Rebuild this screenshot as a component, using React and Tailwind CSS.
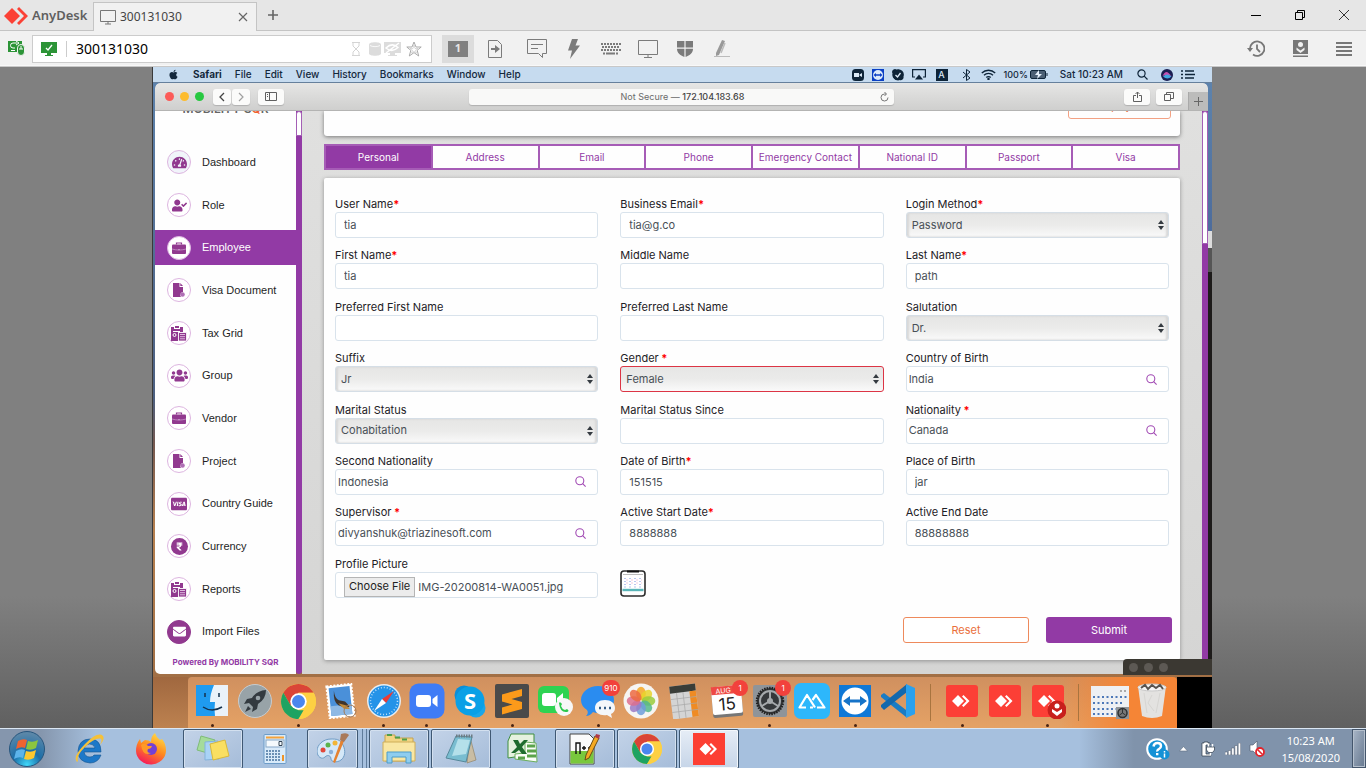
import React from "react";
import {
  FaTachometerAlt,
  FaUserCheck,
  FaUsers,
  FaCcVisa,
  FaRupeeSign,
  FaEnvelope,
  FaApple,
} from "react-icons/fa";

/* ---------- AnyDesk chrome ---------- */

function TitleBar() {
  return (
    <header className="flex h-[31px] items-stretch border-b border-[#c4c4c4] bg-[#e6e6e6]">
      <div className="flex w-[93px] items-center pt-[2px] pl-1 text-[#5f5f5f]">
        <svg width="24" height="18" viewBox="0 0 24 18" aria-hidden="true">
          <path d="M8 1l8 8-8 8-8-8z" fill="#fb4135" />
          <path d="M13 2l2-2 9 9-9 9-2-2 7-7z" fill="#fb4135" />
        </svg>
        <span className="pl-1 text-[13px] font-semibold">AnyDesk</span>
      </div>
      <div className="mt-[2px] -mb-px flex w-[164px] items-center border-x border-t border-[#c4c4c4] bg-[#f1f1f1] pr-2 pl-[6px] text-[#444]">
        <svg width="16" height="15" viewBox="0 0 16 15" fill="none" stroke="#777" aria-hidden="true">
          <path d="M.5.5h15v11H.5zM8 11v3M5 14h6" />
        </svg>
        <span className="flex-1 pl-1 text-[12px]">300131030</span>
        <button aria-label="Close tab">
          <svg width="10" height="10" viewBox="0 0 10 10" stroke="#666" strokeWidth="1.2">
            <path d="M1 1l8 8M9 1l-8 8" />
          </svg>
        </button>
      </div>
      <button aria-label="New tab" className="ml-[11px]">
        <svg width="10" height="10" viewBox="0 0 10 10" stroke="#666" strokeWidth="1.6">
          <path d="M5 0v10M0 5h10" />
        </svg>
      </button>
      <div className="flex flex-1 items-center justify-end gap-[34px] pr-[17px]">
        <button aria-label="Minimize">
          <svg width="10" height="10" viewBox="0 0 10 10" stroke="#000">
            <path d="M0 5.5h10" />
          </svg>
        </button>
        <button aria-label="Restore">
          <svg width="10" height="10" viewBox="0 0 10 10" stroke="#000" fill="none">
            <path d="M.5 2.500h7v7h-7zM2.500 2.500v-2h7v7h-2" />
          </svg>
        </button>
        <button aria-label="Close">
          <svg width="10" height="10" viewBox="0 0 10 10" stroke="#333">
            <path d="M0 0l10 10M10 0L0 10" />
          </svg>
        </button>
      </div>
    </header>
  );
}

function ToolButton({ label, children }) {
  return (
    <button aria-label={label} className="flex h-7 w-[37px] items-center justify-center text-[#7b7b7b]">
      {children}
    </button>
  );
}

function SessionToolbar() {
  return (
    <div className="flex h-[36px] items-center border-b border-[#c8c8c8] bg-[#f1f1f1] shadow-[inset_0_-1px_0_#f8f8f8]">
      <div className="flex w-8 justify-center">
        <svg width="17" height="15" viewBox="0 0 17 15" aria-hidden="true">
          <path d="M0 0h14v5l-3 2v4H0z" fill="#2c9437" />
          <path d="M9 2H5a2 2 0 000 5h2M8 0l3 2-3 2M3 9.500h4" stroke="#fff" fill="none" />
          <rect x="9.500" y="3.500" width="7" height="11" rx="3.500" fill="#2c9437" stroke="#f1f1f1" />
          <path d="M11 8h4M13 5v3" stroke="#fff" />
        </svg>
      </div>
      <div className="flex h-7 w-[400px] items-center gap-[3px] border border-[#ccc] bg-white pr-[9px] pl-2">
        <svg width="16" height="14" viewBox="0 0 16 14" aria-hidden="true">
          <path d="M0 0h16v11h-6v2h2v1H4v-1h2v-2H0z" fill="#2c9437" />
          <path d="M5 6l2 2 4-5" stroke="#fff" strokeWidth="1.300" fill="none" />
        </svg>
        <div className="ml-[6px] h-4 w-px bg-[#ccc]" />
        <input
          aria-label="Remote address"
          defaultValue="300131030"
          className="ml-[6px] min-w-0 flex-1 bg-transparent text-[14px] text-black outline-none"
        />
        <svg width="10" height="14" viewBox="0 0 10 14" fill="none" stroke="#d4d4d4" aria-hidden="true">
          <path d="M1 .5h8M1 13.500h8M2 1v3l3 3 3-3V1M2 13v-3l3-3 3 3v3" />
        </svg>
        <svg className="ml-[5px]" width="12" height="14" viewBox="0 0 12 14" fill="#dcdcdc" aria-hidden="true">
          <path d="M0 2.500C0-.5 12-.5 12 2.500v9c0 3-12 3-12 0z" />
          <path d="M1 3.500c2 1.500 8 1.500 10 0" stroke="#fff" fill="none" strokeWidth=".8" />
        </svg>
        <svg width="17" height="14" viewBox="0 0 17 14" aria-hidden="true">
          <path d="M0 0h17v11h-6v2h2v1H4v-1h2v-2H0z" fill="#dcdcdc" />
          <path d="M2 6q6-6 12-.5Q8 11 2 6zM2 11L15 1" stroke="#fff" fill="none" strokeWidth="1.500" />
        </svg>
        <svg className="ml-[2px]" width="16" height="16" viewBox="0 0 16 16" fill="none" stroke="#aaa" aria-hidden="true">
          <path d="M8 1l2 5h5.200l-4 3.300L12.700 15 8 11.600 3.300 15l1.500-5.700-4-3.300H6z" />
          <path d="M8 4l1 3.500h3L9.500 9.300l1 2.700L8 10.300 5.500 12l1-2.700L4 7.500h3z" strokeWidth=".4" />
        </svg>
      </div>
      <button aria-label="Display 1" className="ml-[10px] flex h-7 w-8 items-center justify-center bg-[#dcdcdc]">
        <span className="flex h-4 w-5 items-center justify-center bg-[#808080] text-[11px] font-bold text-[#e6e6e6]">1</span>
      </button>
      <div className="ml-[2px] flex">
        <ToolButton label="Transfer files">
          <svg width="14" height="18" viewBox="0 0 14 18" fill="none" stroke="currentColor">
            <path d="M.5.5h9l4 4v13H.5z" />
            <path d="M3 8h4V5l5 4-5 4v-3H3z" fill="currentColor" stroke="none" />
          </svg>
        </ToolButton>
        <div className="w-[5px]" />
        <ToolButton label="Chat">
          <svg width="20" height="19" viewBox="0 0 20 19" fill="none" stroke="currentColor">
            <path d="M.5.5h19v14h-4v4l-4-4H.5zM4 5.500h12M4 9.500h7" />
          </svg>
        </ToolButton>
        <ToolButton label="Actions">
          <svg width="14" height="20" viewBox="0 0 14 20">
            <path d="M5 0h6L8.500 6.500H13L3 20l2-8.500H1z" fill="currentColor" />
          </svg>
        </ToolButton>
        <ToolButton label="Keyboard">
          <svg width="20" height="12" viewBox="0 0 20 12" fill="none" stroke="currentColor" strokeWidth="2">
            <path d="M0 1h20M0 7h20" strokeDasharray="2 1" />
            <path d="M1 4h18" strokeDasharray="2 1" />
            <path d="M2 10.500h2M5 10.500h9M15 10.500h2" />
          </svg>
        </ToolButton>
        <ToolButton label="Display">
          <svg width="20" height="18" viewBox="0 0 20 18" fill="none" stroke="currentColor">
            <path d="M.5.5h19v14H.5zM10 15v2.500M6 17.500h8" />
          </svg>
        </ToolButton>
        <ToolButton label="Permissions">
          <svg width="16" height="17" viewBox="0 0 16 17" fill="currentColor">
            <path d="M0 1h7.400v6.500H0zM8.600 1H16v6.500H8.600zM0 8.700h7.400V17C3 15 0 13 0 8.700zM8.600 8.700H16c0 4.300-3 6.300-7.400 8.300z" />
          </svg>
        </ToolButton>
        <ToolButton label="Draw">
          <svg width="16" height="19" viewBox="0 0 16 19" fill="none">
            <path d="M8 1l3 1-6 14-3 1V14z" fill="#999" />
            <path d="M11 4L7 14" stroke="#bbb" strokeWidth="1.500" />
            <path d="M0 17.500h16" stroke="#bbb" />
          </svg>
        </ToolButton>
      </div>
      <div className="flex flex-1 items-center justify-end gap-7 pr-[14px] text-[#777]">
        <button aria-label="History">
          <svg width="18" height="17" viewBox="0 0 18 17" fill="none" stroke="currentColor" strokeWidth="1.800">
            <path d="M3 9A7.200 7.200 0 116 14.500M10 4.500V9l3 3" />
            <path d="M0 8h6l-3 4z" fill="currentColor" stroke="none" />
          </svg>
        </button>
        <button aria-label="Downloads">
          <svg width="15" height="17" viewBox="0 0 15 17">
            <path d="M0 0h15v14H0zM0 15.500h15V17H0z" fill="currentColor" />
            <circle cx="7.500" cy="4.500" r="2.500" fill="#f1f1f1" />
            <path d="M3.500 7.500l4 3 4-3v2.500l-4 3-4-3z" fill="#f1f1f1" />
          </svg>
        </button>
        <button aria-label="Menu">
          <svg width="16" height="14" viewBox="0 0 16 14" stroke="currentColor" strokeWidth="2">
            <path d="M0 1h16M0 5h16M0 9h16M0 13h16" />
          </svg>
        </button>
      </div>
    </div>
  );
}

/* ---------- macOS menu bar ---------- */

const MENUS = ["File", "Edit", "View", "History", "Bookmarks", "Window", "Help"];

function MenuBar() {
  return (
    <div className="flex h-4 items-center border-b border-[#66809c] bg-[#c6dbef] pr-[17px] pl-[15px] text-[10px] font-medium text-[#14283c]">
      <FaApple size={11} />
      <nav className="ml-[14px] flex flex-1 gap-[13px]">
        <b className="font-bold">Safari</b>
        {MENUS.map((m) => (
          <span key={m}>{m}</span>
        ))}
      </nav>
      <div className="flex items-center gap-2">
        <svg width="12" height="12" viewBox="0 0 12 12" aria-hidden="true">
          <rect width="12" height="12" rx="3.500" fill="#0e2438" />
          <path d="M2 4h5v4H2zM7.500 5.500L10 4v4L7.500 6.500z" fill="#dbe9f6" />
        </svg>
        <svg width="12" height="12" viewBox="0 0 12 12" aria-hidden="true">
          <rect width="12" height="12" fill="#0a3fc4" />
          <circle cx="6" cy="6" r="5" fill="#dcebfa" />
          <path d="M1.500 6L4 4v1.300h4V4l2.500 2L8 8V6.700H4V8z" fill="#0a3fc4" />
        </svg>
        <svg width="12" height="12" viewBox="0 0 12 12" aria-hidden="true">
          <path d="M3 0a3 3 0 00-2.500 4.500A5.500 5.500 0 007.500 11 3 3 0 0011.500 7.500 5.500 5.500 0 004.500.5z" fill="#0e2438" />
          <circle cx="6" cy="6" r="5.200" fill="#0e2438" />
          <path d="M3.500 6l2 2 3-4" stroke="#dbe9f6" strokeWidth="1.300" fill="none" />
        </svg>
        <svg width="14" height="11" viewBox="0 0 14 11" aria-hidden="true">
          <path d="M3 8H.6V.6h12.800V8H11" fill="none" stroke="#0e2438" strokeWidth="1.200" />
          <path d="M7 5.500l4 5H3z" fill="#0e2438" />
        </svg>
        <span className="ml-[2px] flex h-3 w-3 items-center justify-center bg-[#0e2438] text-[9px] text-[#dbe9f6]">A</span>
        <svg className="ml-[6px]" width="9" height="12" viewBox="0 0 9 12" fill="none" stroke="#0e2438" aria-hidden="true">
          <path d="M1 3l7 6-3.500 2.500V.5L8 3 1 9" />
        </svg>
        <svg className="ml-[2px]" width="15" height="11" viewBox="0 0 15 11" fill="none" stroke="#0e2438" strokeWidth="1.300" aria-hidden="true">
          <path d="M.8 4a9.500 9.500 0 0113.400 0M3 6.300a6.400 6.400 0 019 0M5.300 8.500a3 3 0 014.400 0" />
          <circle cx="7.500" cy="10" r=".6" />
        </svg>
        <span className="text-[9px]">100%</span>
        <svg className="-ml-[6px]" width="18" height="9" viewBox="0 0 18 9" aria-hidden="true">
          <rect x=".5" y=".5" width="15" height="8" rx="1.500" fill="#4b5f74" stroke="#0e2438" />
          <path d="M9 0L5 5h3L7 9l5-5H9z" fill="#e4effa" />
          <path d="M17 3v3" stroke="#0e2438" />
        </svg>
        <span className="ml-1">Sat 10:23 AM</span>
        <svg className="ml-[6px]" width="11" height="11" viewBox="0 0 11 11" fill="none" stroke="#0e2438" strokeWidth="1.200" aria-hidden="true">
          <circle cx="4.500" cy="4.500" r="3.600" />
          <path d="M7.200 7.200L10.500 10.500" />
        </svg>
        <svg className="ml-[5px]" width="12" height="12" viewBox="0 0 12 12" aria-hidden="true">
          <circle cx="6" cy="6" r="6" fill="#1a1e52" />
          <path d="M1.500 7q3-6 6-3t3 3q-5-2-9 0z" fill="#c54fb0" />
          <path d="M2 7.500q4-4 8.500 0-4 4-8.500 0z" fill="#42a5e0" />
        </svg>
        <svg width="14" height="9" viewBox="0 0 14 9" stroke="#0e2438" strokeWidth="1.500" aria-hidden="true">
          <path d="M0 1h2M4 1h9M0 4.500h2M4 4.500h10M0 8h2M4 8h9" />
        </svg>
      </div>
    </div>
  );
}

/* ---------- Safari window ---------- */

function SafariButton({ label, className = "w-[26px]", children }) {
  return (
    <button
      aria-label={label}
      className={"flex h-4 items-center justify-center rounded-[3px] bg-[#fbfbfa] text-[#606060] shadow-[0_1px_1px_#b0b0b0] " + className}
    >
      {children}
    </button>
  );
}

function SafariToolbar() {
  return (
    <div className="grid h-7 grid-cols-[28fr_38fr_28fr] items-center rounded-t-[5px] border-b border-[#b4b4b3] bg-linear-to-b from-[#e6e6e5] to-[#cfcfce]">
      <div className="flex items-center pl-[10px]">
        <div className="flex gap-[6px]">
          <span className="h-[9px] w-[9px] rounded-full bg-[#fc5b57]" />
          <span className="h-[9px] w-[9px] rounded-full bg-[#fdbc2e]" />
          <span className="h-[9px] w-[9px] rounded-full bg-[#27c840]" />
        </div>
        <div className="ml-[9px] flex gap-px">
          <SafariButton label="Back" className="w-[18px]">
            <svg width="6" height="10" viewBox="0 0 6 10" fill="none" stroke="#444" strokeWidth="1.300">
              <path d="M5 1L1 5l4 4" />
            </svg>
          </SafariButton>
          <SafariButton label="Forward" className="w-[18px]">
            <svg width="6" height="10" viewBox="0 0 6 10" fill="none" stroke="#a0a0a0" strokeWidth="1.200">
              <path d="M1 1l4 4-4 4" />
            </svg>
          </SafariButton>
        </div>
        <div className="ml-2">
          <SafariButton label="Show sidebar">
            <svg width="12" height="9" viewBox="0 0 12 9" fill="none" stroke="currentColor">
              <path d="M.5.5h11v8H.5zM4.500.5v8M2 2.500h1M2 4.500h1" />
            </svg>
          </SafariButton>
        </div>
      </div>
      <div className="flex h-4 items-center rounded-[3px] bg-[#f9f9f8] pr-[5px] pl-4 text-[9px] text-[#6a6a6a] shadow-[0_1px_1px_#b0b0b0]">
        <span className="flex-1 text-center">
          Not Secure — <span className="font-medium text-[#444]">172.104.183.68</span>
        </span>
        <button aria-label="Reload">
          <svg width="9" height="10" viewBox="0 0 9 10" fill="none" stroke="#777">
            <path d="M8 5.500A3.500 3.500 0 114.500 2H6M4.500 0l2 2-2 2" />
          </svg>
        </button>
      </div>
      <div className="flex h-full items-center justify-end gap-[6px]">
        <SafariButton label="Share">
          <svg width="9" height="11" viewBox="0 0 9 11" fill="none" stroke="currentColor">
            <path d="M3 4.500H.5v6h8v-6H6M4.500 7V1M2.500 3l2-2 2 2" />
          </svg>
        </SafariButton>
        <SafariButton label="Tab overview">
          <svg width="10" height="9" viewBox="0 0 10 9" fill="none" stroke="currentColor">
            <path d="M.5 2.500h6v6h-6zM2.500 2.500v-2h7v6h-3" />
          </svg>
        </SafariButton>
        <button aria-label="New tab" className="flex h-[18px] w-5 items-center justify-center self-end border-l border-[#a9a9a9] bg-[#bcbcbb]">
          <svg width="9" height="9" viewBox="0 0 9 9" stroke="#666">
            <path d="M4.500 0v9M0 4.500h9" />
          </svg>
        </button>
      </div>
    </div>
  );
}

/* ---------- Sidebar ---------- */

function BriefcaseIcon() {
  return (
    <svg width="14" height="12" viewBox="0 0 14 12" aria-hidden="true">
      <path d="M4.500 2.500V1h5v1.500" fill="none" stroke="currentColor" strokeWidth="1.200" />
      <path d="M1 2.500h12q1 0 1 1v7.500q0 1-1 1H1q-1 0-1-1V3.500q0-1 1-1z" fill="currentColor" />
      <path d="M0 7q3.500 1 6 1M14 7q-3.500 1-6 1" stroke="#d9b0dc" strokeWidth=".6" fill="none" />
      <path d="M6.300 7h1.400v1.600H6.300z" fill="#d9b0dc" />
    </svg>
  );
}

function DocIcon() {
  return (
    <svg width="14" height="15" viewBox="0 0 14 15" aria-hidden="true">
      <path d="M1 0h6.500v4H11v5a3 3 0 00-2 5H1z" fill="currentColor" />
      <path d="M8.300 0L11 3H8.300z" fill="currentColor" />
      <circle cx="10.500" cy="11.500" r="2.300" fill="#b06fb5" />
    </svg>
  );
}

function GridIcon() {
  return (
    <svg width="16" height="15" viewBox="0 0 16 15" aria-hidden="true">
      <path d="M0 1h3v2h6V1h3v5h-5v9H0z" fill="currentColor" />
      <path d="M4 0h4v2H4z" fill="currentColor" />
      <path d="M2 5.500h7M2 9a1.500 1.500 0 003 0 1.500 1.500 0 00-3 0" stroke="#fff" fill="none" />
      <path d="M7.500 6.500h8V15h-8z" fill="currentColor" stroke="#fff" strokeWidth=".8" />
      <path d="M9 8.500h5M9 10.700h5M9 12.800h5" stroke="#e6c8e8" strokeWidth=".9" />
    </svg>
  );
}

const NAV = [
  { label: "Dashboard", icon: <FaTachometerAlt size={15} />, tint: true },
  { label: "Role", icon: <FaUserCheck size={15} /> },
  { label: "Employee", icon: <BriefcaseIcon />, active: true },
  { label: "Visa Document", icon: <DocIcon /> },
  { label: "Tax Grid", icon: <GridIcon /> },
  { label: "Group", icon: <FaUsers size={17} /> },
  { label: "Vendor", icon: <BriefcaseIcon /> },
  { label: "Project", icon: <DocIcon /> },
  { label: "Country Guide", icon: <FaCcVisa size={16} /> },
  {
    label: "Currency",
    icon: (
      <span className="flex h-[17px] w-[17px] items-center justify-center rounded-full bg-[#91398f] text-white">
        <FaRupeeSign size={9} />
      </span>
    ),
  },
  { label: "Reports", icon: <GridIcon /> },
  { label: "Import Files", icon: <FaEnvelope size={13} color="#fff" />, solid: true },
];

function Sidebar() {
  return (
    <aside className="flex w-[141px] flex-col overflow-hidden bg-[#fefefe]">
      <div className="flex h-[30px] justify-center">
        <div className="-mt-[10px] text-[12px] leading-4 font-semibold whitespace-nowrap text-[#666]">
          MOBILITY S<span className="text-[#f06030]">Q</span>R
        </div>
      </div>
      <nav className="flex flex-1 flex-col font-['Liberation_Sans',sans-serif]">
        {NAV.map((n) => (
          <div key={n.label} className="flex flex-1 items-center">
            <a
              href="#"
              className={
                "flex h-[35px] w-full items-center gap-[11px] pl-3 text-[11px] " +
                (n.active ? "bg-[#923aa5] text-white" : "text-[#1f1f1f]")
              }
            >
              <span
                className={
                  "flex h-6 w-6 items-center justify-center rounded-full border text-[#91398f] " +
                  (n.solid ? "border-[#91398f] bg-[#91398f]" : n.tint ? "border-[#ddb5e0] bg-[#f1f4fa]" : "border-[#ddb5e0] bg-white")
                }
              >
                {n.icon}
              </span>
              {n.label}
            </a>
          </div>
        ))}
      </nav>
      <div className="h-[21px] text-center text-[8px] leading-[18px] font-bold text-[#923aa5]">Powered By MOBILITY SQR</div>
    </aside>
  );
}

/* ---------- Employee form ---------- */

const TABS = ["Personal", "Address", "Email", "Phone", "Emergency Contact", "National ID", "Passport", "Visa"];

const FIELDS = [
  { label: "User Name", req: "*", value: "tia" },
  { label: "Business Email", req: "*", value: "tia@g.co" },
  { label: "Login Method", req: "*", value: "Password", kind: "select" },
  { label: "First Name", req: "*", value: "tia" },
  { label: "Middle Name", value: "" },
  { label: "Last Name", req: "*", value: "path" },
  { label: "Preferred First Name", value: "" },
  { label: "Preferred Last Name", value: "" },
  { label: "Salutation", value: "Dr.", kind: "select" },
  { label: "Suffix", value: "Jr", kind: "select" },
  { label: "Gender", req: " *", value: "Female", kind: "select", invalid: true },
  { label: "Country of Birth", value: "India", kind: "search" },
  { label: "Marital Status", value: "Cohabitation", kind: "select" },
  { label: "Marital Status Since", value: "" },
  { label: "Nationality", req: " *", value: "Canada", kind: "search" },
  { label: "Second Nationality", value: "Indonesia", kind: "search" },
  { label: "Date of Birth", req: "*", value: "151515" },
  { label: "Place of Birth", value: "jar" },
  { label: "Supervisor", req: " *", value: "divyanshuk@triazinesoft.com", kind: "search" },
  { label: "Active Start Date", req: "*", value: "8888888" },
  { label: "Active End Date", value: "88888888" },
];

const LABEL = "block h-4 text-[11px] leading-4 whitespace-pre text-[#1d2126]";
const BOX = "h-[26px] w-full rounded-[3px] border text-[11px] text-[#495057] outline-none";

function Field({ label, req, value, kind, invalid }) {
  const id = label.toLowerCase().replaceAll(" ", "-");
  return (
    <div>
      <label htmlFor={id} className={LABEL}>
        {label}
        {req && <span className="font-bold text-[#f00]">{req}</span>}
      </label>
      {kind === "select" ? (
        <div className="relative">
          <select
            id={id}
            defaultValue={value}
            className={
              BOX +
              " block appearance-none bg-linear-to-b from-[#e6e6e5] via-[#ebebea] to-[#fafafa] px-[5px] " +
              (invalid
                ? "border-[#dc3545]"
                : "border-[#d5dee6] shadow-[inset_2px_0_2px_#d8d8d8,inset_-2px_0_2px_#d8d8d8]")
            }
          >
            <option>{value}</option>
          </select>
          <svg className="pointer-events-none absolute top-2 right-[5px]" width="6" height="10" viewBox="0 0 6 10" fill="#343a40" aria-hidden="true">
            <path d="M3 0l3 4H0zM3 10l3-4H0z" />
          </svg>
        </div>
      ) : kind === "search" ? (
        <div className={BOX + " flex items-center border-[#d9e3ec] bg-white pr-[11px] pl-[2px]"}>
          <input id={id} defaultValue={value} className="min-w-0 flex-1 bg-transparent outline-none" />
          <button aria-label={"Search " + label}>
            <svg width="11" height="11" viewBox="0 0 11 11" fill="none" stroke="#a24bb4" strokeWidth="1.100">
              <circle cx="4.800" cy="4.800" r="4" />
              <path d="M7.700 7.700L10.600 10.600" />
            </svg>
          </button>
        </div>
      ) : (
        <input id={id} defaultValue={value} className={BOX + " block border-[#d9e3ec] bg-white px-2"} />
      )}
    </div>
  );
}

function EmployeeForm() {
  return (
    <form
      onSubmit={(e) => e.preventDefault()}
      className="mt-[9px] flex flex-1 flex-col rounded-[2px] bg-[#fefefe] px-[11px] pt-[18px] pb-[17px] shadow-[0_1px_4px_#8f8f8f]"
    >
      <div className="grid flex-1 auto-rows-fr grid-cols-3 gap-x-[22px]">
        {FIELDS.map((f) => (
          <Field key={f.label} {...f} />
        ))}
        <div>
          <span id="picture-label" className={LABEL}>
            Profile Picture
          </span>
          <label className={BOX + " relative flex items-end border-[#d9e3ec] bg-white pl-2"}>
            <input type="file" aria-labelledby="picture-label" className="sr-only" />
            <span className="mr-[3px] flex h-5 items-center border border-[#b5b5b5] bg-[#ececec] px-1 text-[#222]">Choose File</span>
            <span className="leading-5">IMG-20200814-WA0051.jpg</span>
          </label>
        </div>
        <div className="pt-[14px]">
          <svg width="26" height="27" viewBox="0 0 26 27" role="img" aria-label="Profile picture preview">
            <rect x="1" y="1" width="24" height="25" rx="3" fill="#fff" stroke="#2c2c2c" strokeWidth="1.600" />
            <path d="M7 1.500h12" stroke="#111" strokeWidth="2" />
            <path d="M3 4.500h20" stroke="#bbb" />
            <path d="M4 8.500h19M4 11.500h19M4 14.500h19M4 17h19" stroke="#b9c6ee" strokeDasharray="2 3" />
            <path d="M6 10h16M6 13h16" stroke="#f3cbe2" strokeDasharray="2 3" />
            <path d="M2.500 20h21" stroke="#59b5b8" strokeWidth="2.400" />
          </svg>
        </div>
      </div>
      <div className="-mr-[3px] mt-[10px] flex justify-end gap-[17px] text-[11px]">
        <button type="reset" className="h-[26px] w-[126px] rounded-[3px] border border-[#ee8a5c] bg-white text-[#ea6f3c]">
          Reset
        </button>
        <button type="submit" className="h-[26px] w-[126px] rounded-[3px] bg-[#923aa5] text-white">
          Submit
        </button>
      </div>
    </form>
  );
}

function MainPane() {
  return (
    <main className="flex min-w-0 flex-1 flex-col overflow-hidden bg-linear-to-b from-[#e0e0df] to-[#d5d5d4] px-[22px] pb-[14px]">
      <div className="h-[25px] rounded-b-[3px] bg-[#fefefe] shadow-[0_1px_4px_#777]">
        <div className="flex h-full justify-end overflow-hidden pr-[9px]">
          <button className="-mt-[18px] h-[26px] w-[103px] rounded-[3px] border border-[#f3a284] text-[10px] text-[#ea6f3c]">
            Employee
          </button>
        </div>
      </div>
      <div role="tablist" className="mt-2 -mb-px flex h-[26px] border border-[#a65cb6] bg-[#fefefe] text-[10px]">
        {TABS.map((t, i) => (
          <button
            key={t}
            role="tab"
            aria-selected={i === 0}
            className={
              "min-w-0 flex-1 border border-[#a65cb6] whitespace-nowrap " +
              (i === 0 ? "bg-[#923aa5] text-white" : "text-[#923aa5]")
            }
          >
            {t}
          </button>
        ))}
      </div>
      <EmployeeForm />
    </main>
  );
}

function ScrollTrack({ thumb }) {
  return (
    <div className="w-[6px] shrink-0 rounded-b-full bg-[#923aa5]">
      <div className={"rounded-t-full border border-[#a45fb5] bg-white " + thumb} />
    </div>
  );
}

/* ---------- Dock ---------- */

function Chrome({ size }) {
  return (
    <svg width={size} height={size} viewBox="0 0 34 34" aria-hidden="true">
      <circle cx="17" cy="17" r="17" fill="#fdd043" />
      <path d="M2.300 8.500A17 17 0 0131.700 8.500H17L9.600 21.300z" fill="#da4437" />
      <path d="M2.300 8.500L9.600 21.200 17 25.500h7.400L17 34A17 17 0 012.300 8.500z" fill="#1ea362" />
      <path d="M24.400 21.200L17 34A17 17 0 0031.700 8.500H17z" fill="#fdd043" />
      <circle cx="17" cy="17" r="8" fill="#fff" />
      <circle cx="17" cy="17" r="6.300" fill="#4a86ee" />
    </svg>
  );
}

function Ico({ children, label }) {
  return (
    <svg width="36" height="36" viewBox="0 0 36 36" role="img" aria-label={label}>
      {children}
    </svg>
  );
}

function AnyDeskIcon({ incoming }) {
  return (
    <Ico label="AnyDesk">
      <rect x="2" y="2" width="32" height="32" rx="3" fill="#fc3f36" />
      <path d="M14 12l6 6-6 6-6-6zM18 13.500l1.500-1.500 6 6-6 6-1.500-1.500 4.500-4.500z" fill="#fff" />
      {incoming && (
        <g>
          <circle cx="27" cy="27" r="9.500" fill="#c8201c" />
          <circle cx="27" cy="23" r="2.500" fill="#fff" />
          <path d="M22 26l5 3 5-3v3l-5 4-5-4z" fill="#fff" />
        </g>
      )}
    </Ico>
  );
}

const PETALS = ["#f5a623", "#e8d32c", "#9acb3c", "#55b889", "#6f9ddb", "#9a7ac6", "#dc6f8e", "#ec6a42"];

const APPS = [
  {
    dot: true,
    icon: (
      <Ico label="Finder">
        <rect x="2" y="2" width="32" height="31" fill="#eaf2fa" />
        <path d="M2 2h18q-4 9-4 17h5q-1 7 0 14H2z" fill="#1f9bf0" />
        <path d="M11 10v4M25 10v4M9 24q9 6 19 0" stroke="#15324e" strokeWidth="1.500" fill="none" />
      </Ico>
    ),
  },
  {
    icon: (
      <Ico label="Launchpad">
        <circle cx="18" cy="18" r="16.500" fill="#98a3a8" stroke="#c8ccce" />
        <path d="M29 7q-10 1-14 8l-5 1-3 5 5-1 4 4-1 5 5-3 1-5q8-5 8-14zM11 23l-3 6 6-3z" fill="#333a40" />
        <circle cx="21" cy="15" r="2.300" fill="#98a3a8" />
      </Ico>
    ),
  },
  { dot: true, icon: <Chrome size={35} /> },
  {
    icon: (
      <Ico label="Mail">
        <g transform="rotate(-6 18 18)">
          <rect x="5" y="2" width="25" height="32" fill="#fff" stroke="#fff" strokeWidth="2" strokeDasharray="2 1.500" />
          <rect x="7" y="4" width="21" height="28" fill="#4a90d9" />
          <path d="M7 22h21v10H7z" fill="#8fb9e4" />
          <path d="M12 7q0 8 4 10l6 2 4 5-3 2-8-4q-5-4-3-15z" fill="#3f342c" />
          <path d="M15 20l8 3 3 4-6-1z" fill="#c08a3a" />
        </g>
        <circle cx="27" cy="28" r="6" fill="none" stroke="#a27a58" />
      </Ico>
    ),
  },
  {
    dot: true,
    icon: (
      <Ico label="Safari">
        <circle cx="18" cy="18" r="17" fill="#e9edf0" />
        <circle cx="18" cy="18" r="15.500" fill="#2493e8" />
        <circle cx="18" cy="18" r="13.500" fill="none" stroke="#bfe0fa" strokeDasharray="1 2" strokeWidth="1.500" />
        <path d="M28 8l-8 12-4-4z" fill="#ec3b36" />
        <path d="M8 28l8-12 4 4z" fill="#fff" />
      </Ico>
    ),
  },
  {
    dot: true,
    icon: (
      <Ico label="Zoom">
        <rect x=".5" y=".5" width="35" height="35" rx="9" fill="#3f7cf6" />
        <rect x="7" y="12" width="15" height="12" rx="3" fill="#fff" />
        <path d="M23.500 16l5-4v12l-5-4z" fill="#fff" />
      </Ico>
    ),
  },
  {
    dot: true,
    icon: (
      <Ico label="Skype">
        <circle cx="12" cy="12" r="9.500" fill="#0c8fd8" />
        <circle cx="24" cy="25" r="9.500" fill="#1aa6e8" />
        <circle cx="18" cy="18" r="14.500" fill="#0aa0e6" />
        <text x="18" y="26" textAnchor="middle" fontSize="22" fontWeight="bold" fill="#fff" fontFamily="Noto Sans, sans-serif">S</text>
      </Ico>
    ),
  },
  {
    dot: true,
    icon: (
      <Ico label="Sublime Text">
        <rect x="1" y="1" width="34" height="34" rx="2" fill="#4a4a4a" />
        <path d="M8 11.500L28 6v7l-10.500 3L28 19v7L8 31.500v-7L18.500 21.500 8 18.500z" fill="#fb9a1a" />
      </Ico>
    ),
  },
  {
    icon: (
      <Ico label="FaceTime">
        <rect x="1" y="3" width="31" height="27" rx="6" fill="#2ed352" />
        <rect x="5" y="10" width="14" height="13" rx="3" fill="#fff" />
        <path d="M20 15l6-5v13l-6-5z" fill="#fff" />
        <circle cx="27" cy="24" r="9" fill="#f7f7f7" />
        <path d="M22 20q1-2 3 1l-1 2q1 3 4 4l2-1q3 2 0 3-7 1-8-9z" fill="#2bc94c" />
      </Ico>
    ),
  },
  {
    dot: true,
    badge: "910",
    icon: (
      <Ico label="Messages">
        <path d="M18 3c9 0 16 6 16 14s-7 13-16 13q-3 0-5-1-3 4-7 4 3-3 1-6-6-4-6-10C1 9 9 3 18 3z" fill="#2a8cf0" />
        <path d="M25 17c6 0 10 3 10 8q0 4-4 6l1 4-5-3c-7 1-12-2-12-7s4-8 10-8z" fill="#f4f7fa" />
        <path d="M19 25h2M24 25h2M29 25h2" stroke="#335b86" strokeWidth="2.500" />
      </Ico>
    ),
  },
  {
    icon: (
      <Ico label="Photos">
        <circle cx="18" cy="18" r="17.500" fill="#f6f5f3" />
        {PETALS.map((c, i) => (
          <ellipse key={c} cx="18" cy="10.500" rx="4.800" ry="6.800" fill={c} opacity=".85" transform={`rotate(${i * 45} 18 18)`} />
        ))}
      </Ico>
    ),
  },
  {
    icon: (
      <Ico label="Calculator">
        <g transform="rotate(-7 18 18)">
          <rect x="5" y="2" width="26" height="33" fill="#d4d4d4" />
          <path d="M5 2h26v7H5z" fill="#3a3d38" />
          <path d="M24.500 9H31v26h-6.500z" fill="#ef8b24" />
          <path d="M5 15h26M5 21.500h26M5 28h26M11.500 9v26M18 9v26" stroke="#a8a8a8" strokeWidth=".7" />
        </g>
      </Ico>
    ),
  },
  {
    badge: "1",
    icon: (
      <Ico label="Calendar">
        <g transform="rotate(-5 18 18)">
          <rect x="3" y="4" width="30" height="30" rx="2" fill="#777" />
          <rect x="3" y="3" width="30" height="28" rx="2" fill="#fff" />
          <path d="M3 3h30v8H3z" fill="#ee4a44" />
          <text x="15" y="10" textAnchor="middle" fontSize="7" fill="#fff" fontFamily="Inter, sans-serif">AUG</text>
          <text x="18" y="27" textAnchor="middle" fontSize="17" fill="#222" fontFamily="Inter, sans-serif">15</text>
        </g>
      </Ico>
    ),
  },
  {
    dot: true,
    badge: "1",
    icon: (
      <Ico label="System Preferences">
        <rect x="1" y="2" width="34" height="32" rx="2" fill="#8f9499" />
        <circle cx="18" cy="18" r="13" fill="#35383b" stroke="#222" strokeWidth="2.500" strokeDasharray="1.500 1" />
        <circle cx="18" cy="18" r="10" fill="none" stroke="#a5a9ac" strokeWidth="2" />
        <path d="M18 18V9M18 18l-8 5M18 18l8 5" stroke="#a5a9ac" strokeWidth="2" />
        <circle cx="18" cy="18" r="3" fill="#a5a9ac" />
      </Ico>
    ),
  },
  {
    icon: (
      <Ico label="Mobile app manager">
        <rect width="36" height="36" rx="7" fill="#2db7fb" />
        <path
          d="M12 24.500H5.500L13 12l8 12.500M16 24.500h3M18.500 17L22 12l8.500 12.500H23"
          fill="none"
          stroke="#fff"
          strokeWidth="2.200"
          strokeLinejoin="round"
        />
      </Ico>
    ),
  },
  {
    dot: true,
    icon: (
      <Ico label="TeamViewer">
        <rect x="2" y="2" width="32" height="32" fill="#0f78d6" />
        <circle cx="18" cy="18" r="13.500" fill="#fff" />
        <path d="M6 18l7-5v3.500h10V13l7 5-7 5v-3.500H13V23z" fill="#1673c8" />
      </Ico>
    ),
  },
  {
    icon: (
      <Ico label="Visual Studio Code">
        <path d="M1 12l3-2 22 17v7L1 14z" fill="#1a7cc4" />
        <path d="M1 24l3 3L27 9V1L1 22z" fill="#1268ad" />
        <path d="M26 1l9 4v26l-9 4z" fill="#2aa1ee" />
      </Ico>
    ),
  },
];

function DockItem({ dot, badge, icon }) {
  return (
    <div className="relative flex min-w-0 flex-1 flex-col items-center pt-[6px]">
      <div className="flex h-9 items-center">{icon}</div>
      {dot && <span className="mt-[5px] h-[3px] w-[3px] rounded-full bg-[#4a2412]" />}
      {badge && (
        <span className="absolute top-[3px] right-0 flex h-4 min-w-4 items-center justify-center rounded-full bg-[#f2413c] px-[2px] text-[8px] text-white">
          {badge}
        </span>
      )}
    </div>
  );
}

function Dock() {
  return (
    <div className="relative mt-[3px] flex h-[51px]">
      <div className="w-[35px] shrink-0 bg-linear-to-b from-[#a0683f] to-[#bd8250]" />
      <div className="relative flex min-w-0 flex-1 rounded-t-[4px] bg-[linear-gradient(to_right,transparent_88%,#f58536_95%),linear-gradient(to_bottom,#d0905f,#e5a265)] pr-[3px] pl-[3px]">
        {APPS.map((a, i) => (
          <DockItem key={i} {...a} />
        ))}
        <div className="mx-[10px] my-[7px] w-px bg-[#a8743f]" />
        <DockItem dot icon={<AnyDeskIcon />} />
        <DockItem icon={<AnyDeskIcon />} />
        <DockItem dot icon={<AnyDeskIcon incoming />} />
        <div className="mx-[9px] my-[7px] w-px bg-[#a8743f]" />
        <DockItem
          icon={
            <svg width="38" height="36" viewBox="0 0 38 36" role="img" aria-label="Minimized window">
              <rect x="0" y="3" width="38" height="31" fill="#eef0f3" />
              <path d="M2 14h35M2 20h29M2 26h24M2 31h20" stroke="#4d78b8" strokeWidth="2" strokeDasharray="2 2.500" />
              <path d="M29 8h6" stroke="#aaa" strokeWidth="2" strokeDasharray="2 2" />
              <rect x="25" y="24" width="13" height="12" fill="#8f9499" />
              <circle cx="31.500" cy="30" r="4.500" fill="#777" stroke="#2e3133" strokeWidth="1.500" />
              <path d="M31.500 30v-4M31.500 30l-3 2M31.500 30l3 2" stroke="#2e3133" />
            </svg>
          }
        />
        <DockItem
          icon={
            <Ico label="Trash">
              <path d="M4 3h28l-4 30q-10 4-20 0z" fill="#e3e2e0" />
              <ellipse cx="18" cy="4.500" rx="14" ry="3.500" fill="#f6f6f6" stroke="#c9c9c9" />
              <path d="M7 5l4-3 3 4 4-4 4 3 4-3 3 4" stroke="#57534f" strokeWidth="2" fill="none" />
              <path d="M10 10l3 20M18 12l-4 8 6 8M26 10l-4 20" stroke="#d6d5d2" fill="none" />
            </Ico>
          }
        />
      </div>
      <div className="w-[35px] shrink-0 bg-black" />
      <div className="absolute -top-[18px] right-0 flex h-4 w-[89px] items-center gap-[6px] rounded-tl-[4px] bg-[#3b3832] pl-[6px]">
        <span className="h-[9px] w-[9px] rounded-full bg-[#5d5954]" />
        <span className="h-[9px] w-[9px] rounded-full bg-[#5d5954]" />
        <span className="h-[9px] w-[9px] rounded-full bg-[#5d5954]" />
      </div>
    </div>
  );
}

/* ---------- Windows taskbar ---------- */

function TaskButton({ label, open, active, children }) {
  return (
    <button
      aria-label={label}
      className={
        "flex h-10 w-[60px] items-center justify-center " +
        (active
          ? "rounded-[2px] border border-[#3f5873] bg-linear-to-b from-[#e6edf6] to-[#c6d5e8] shadow-[inset_0_0_0_1px_#f3f7fb]"
          : open
            ? "rounded-[2px] border border-[#3f5873] bg-linear-to-br from-[#c3d3e8] to-[#a5bcd9] shadow-[inset_0_0_0_1px_#d3e0ef]"
            : "")
      }
    >
      {children}
    </button>
  );
}

function Taskbar() {
  return (
    <footer className="flex h-10 items-center border-t border-[#dbe7f4] bg-[linear-gradient(to_right,#8596ad_0,#8596ad_3%,#a6c0de_7%,#a6c0de_79%,#8093ab_83%)] text-white">
      <button aria-label="Start" className="mr-[13px] ml-2">
        <svg width="38" height="38" viewBox="0 0 38 38">
          <defs>
            <radialGradient id="orb" cx=".5" cy=".95" r=".9">
              <stop offset="0" stopColor="#3fd8fa" />
              <stop offset=".45" stopColor="#1b6ea8" />
              <stop offset="1" stopColor="#5b87a8" />
            </radialGradient>
          </defs>
          <circle cx="19" cy="19" r="17.500" fill="url(#orb)" stroke="#27567e" />
          <path d="M10 11q5-3 9-1l-2 8q-4-2-9 1z" fill="#ef6331" />
          <path d="M20 11q5 2 10-1l-2 8q-5 3-10 1z" fill="#8bc53f" />
          <path d="M8 21q5-3 9-1l-2 8q-4-2-9 1z" fill="#5db4ea" />
          <path d="M18 21q5 2 10-1l-2 8q-5 3-10 1z" fill="#fdc82f" />
        </svg>
      </button>
      <div className="flex gap-[2px]">
        <TaskButton label="Internet Explorer">
          <svg width="32" height="32" viewBox="0 0 32 32">
            <path d="M28 19H11q1 5 6 5 3 0 4-2h7q-3 8-11 8Q5 29 5 18 6 6 17 6t11 13zM11 15h11q-1-4-5.500-4T11 15z" fill="#1d78c8" stroke="#14548f" strokeWidth=".6" />
            <path d="M4 29Q-1 24 12 11T30 3q2 3-3 9 3-6 0-6.500Q21 5 12 14T5 28z" fill="#f5c13a" />
          </svg>
        </TaskButton>
        <TaskButton label="Firefox">
          <svg width="32" height="32" viewBox="0 0 32 32">
            <defs>
              <linearGradient id="fox" x1=".8" y1="0" x2=".3" y2="1">
                <stop offset="0" stopColor="#ffe14a" />
                <stop offset=".5" stopColor="#ff8a1e" />
                <stop offset="1" stopColor="#f5175a" />
              </linearGradient>
            </defs>
            <path d="M20 0q1 4 5 7l2-1q4 5 4 11A15 14 0 011 18Q1 11 5 6l1 4 4-3q4 0 6 2 0-6 4-9z" fill="url(#fox)" />
            <circle cx="16" cy="16" r="6" fill="#7340d6" />
            <path d="M6 12q4-3 7 1h4q-1 3-4 3-2 4 3 4-8 4-10-8z" fill="#ff9a26" />
          </svg>
        </TaskButton>
        <TaskButton label="Sticky Notes" open>
          <svg width="34" height="28" viewBox="0 0 34 28">
            <path d="M5 1l14 4-4 14L1 15z" fill="#a5dc9b" stroke="#7fbc78" />
            <path d="M9 7l13-1 1 18-14 1z" fill="#a9d3f6" stroke="#83b3dc" />
            <path d="M14 9l15-4 4 16-16 4z" fill="#f9df62" stroke="#d9b93a" />
          </svg>
        </TaskButton>
        <TaskButton label="Calculator">
          <svg width="24" height="30" viewBox="0 0 24 30">
            <rect x="1" y=".5" width="22" height="29" rx="1" fill="#d9ebfa" stroke="#6d9cc8" />
            <path d="M3 3.500h18" stroke="#f4a33c" strokeWidth="2" />
            <rect x="3" y="6" width="18" height="7" fill="#f5fafd" stroke="#86a8c8" />
            <path d="M16 7.500h3v4h-3z" fill="none" stroke="#345" />
            <path d="M3 17h14M3 20h14M3 23h14M3 26h14" stroke="#6b90b5" strokeWidth="2" strokeDasharray="2 1" />
            <path d="M20 21v6" stroke="#ef9426" strokeWidth="2" />
          </svg>
        </TaskButton>
        <div className="relative flex w-[60px] pr-[9px]">
          <span className="absolute inset-y-0 right-0 w-1 border-r border-[#5f7c9b]" />
          <span className="absolute inset-y-0 right-[4px] w-1 border-r border-[#5f7c9b]" />
          <TaskButton label="Paint" open>
            <svg width="32" height="31" viewBox="0 0 32 31">
              <path d="M14 6C6 6 0 12 0 18s5 9 8 6 6-1 6 2 6 4 10 1 5-9 2-15-7-6-12-6z" fill="#d5e8f8" stroke="#6f9cc5" />
              <circle cx="6" cy="17" r="2.500" fill="#e2483b" />
              <circle cx="11" cy="12" r="2.500" fill="#5cb44c" />
              <circle cx="18" cy="10" r="2.500" fill="#f2b535" />
              <circle cx="14" cy="19" r="2.200" fill="#8cb0d8" />
              <path d="M27 8L18 30l-2-1 8-22z" fill="#e58230" />
              <path d="M24 1q6-2 8 1l-5 7-4-2z" fill="#a9795a" />
            </svg>
          </TaskButton>
        </div>
        <TaskButton label="Explorer" open>
          <svg width="34" height="31" viewBox="0 0 34 31">
            <path d="M3 2h10v3h18v23H3z" fill="#f2d583" stroke="#c4a250" />
            <path d="M5 2h5M13 4.500h5M20 6.500h5" stroke="#4f9e4a" strokeWidth="2" />
            <path d="M1 9h32v19H1z" fill="#f9e7a3" stroke="#cfae58" />
            <path d="M5 30V19h24v11h-5v-6H10v6z" fill="#8ecdef" stroke="#4c9cc9" />
          </svg>
        </TaskButton>
        <TaskButton label="Notepad" open>
          <svg width="32" height="30" viewBox="0 0 32 30">
            <path d="M25 3l6 23-9 3z" fill="#c9bda4" stroke="#8a7a5c" strokeWidth=".6" />
            <path d="M11 2l16 1-6 25-20-4z" fill="#79bdd0" stroke="#56889a" />
            <path d="M13 5l12 1-4 14-14 2z" fill="#b4e0ea" />
            <path d="M11 2h17" stroke="#6d7b82" strokeWidth="3" strokeDasharray="1.500 1" />
          </svg>
        </TaskButton>
        <TaskButton label="Excel">
          <svg width="32" height="31" viewBox="0 0 32 31">
            <path d="M4 1h23v20L1 25V8z" fill="#e5f2df" stroke="#3e8e3f" />
            <path d="M18 9l11 1 1 19-22-3v-5l10-1z" fill="#fafdf8" stroke="#6aae5c" />
            <path d="M20 13h8M20 18h9M20 23h9M11 25h7" stroke="#5aa34b" strokeWidth="3" />
            <path d="M6 7h5l2 4 4-4h4l-6 7 5 7h-5l-3-4-4 3H4l6-6z" fill="#1e6b2e" />
          </svg>
        </TaskButton>
        <TaskButton label="Notepad++" open>
          <svg width="32" height="32" viewBox="0 0 32 32">
            <path d="M1 1h19l5 5v25H1z" fill="#fbfbfb" stroke="#444" />
            <path d="M1.500 18h23v12.500h-23z" fill="#79c83d" />
            <path d="M7 21V10h4v11M13 15h4M15 13v4M19 15h4M21 13v4" stroke="#111" strokeWidth="1.400" fill="none" />
            <path d="M26 3l4 2-10 20-4 2 1-5z" fill="#f5a922" stroke="#6b4c16" />
            <path d="M27 1l4 1-1 4-4-2z" fill="#b03a48" />
          </svg>
        </TaskButton>
        <TaskButton label="Chrome" open>
          <Chrome size={30} />
        </TaskButton>
        <TaskButton label="AnyDesk" active>
          <svg width="32" height="32" viewBox="0 0 32 32">
            <rect width="32" height="32" fill="#fc3f33" />
            <path d="M12.500 10l6 6-6 6-6-6zM16.500 11.500L18 10l6 6-6 6-1.500-1.500L21 16z" fill="#fff" />
          </svg>
        </TaskButton>
      </div>
      <div className="flex flex-1 items-center justify-end">
        <svg width="24" height="22" viewBox="0 0 24 22" role="img" aria-label="Help">
          <circle cx="11" cy="11" r="9.800" fill="#1592d6" stroke="#fff" strokeWidth="2" />
          <path d="M7.500 8.500q.5-3.500 4-3.500t3.500 3q0 2-2 3t-1.500 2.500M11.200 15v2.300" stroke="#fff" strokeWidth="2.400" fill="none" />
          <circle cx="18.500" cy="16.500" r="5" fill="#1592d6" />
          <path d="M18.500 13v1.500M18.500 15.500v4" stroke="#fff" strokeWidth="1.500" />
        </svg>
        <button aria-label="Show hidden icons" className="ml-[9px]">
          <svg width="9" height="6" viewBox="0 0 9 6">
            <path d="M4.500.5l4 4.500h-8z" fill="#fff" stroke="#5b6b80" strokeWidth=".6" />
          </svg>
        </button>
        <svg className="ml-[13px]" width="14" height="16" viewBox="0 0 14 16" role="img" aria-label="Power">
          <path d="M3 1h4v1h2v2H5v9h5v2H1V2h2z" fill="#fff" stroke="#2d3947" strokeWidth=".7" />
          <path d="M7.500 3v3M11.500 3v3M9.500 11v3.500" fill="none" stroke="#fff" strokeWidth="1.500" />
          <path d="M5.500 6h8v3l-2 2.500h-4l-2-2.500z" fill="#fff" stroke="#2d3947" strokeWidth=".7" />
        </svg>
        <svg className="ml-[10px]" width="16" height="12" viewBox="0 0 16 12" fill="#fff" stroke="#4a5768" strokeWidth=".5" role="img" aria-label="Network">
          <path d="M0 9h2.500v3H0zM3.300 7.500h2.500V12H3.300zM6.600 5h2.500v7H6.600zM9.900 2.500h2.500V12H9.900zM13.200 0h2.500v12h-2.500z" />
        </svg>
        <svg className="ml-2" width="16" height="16" viewBox="0 0 16 16" role="img" aria-label="Muted">
          <path d="M1 4h3l4-4v14L4 10H1z" fill="#fff" stroke="#4a5768" strokeWidth=".6" />
          <circle cx="11" cy="11" r="4" fill="#fff" stroke="#e3242b" strokeWidth="1.800" />
          <path d="M8.500 8.500l5 5" stroke="#e3242b" strokeWidth="1.600" />
        </svg>
        <div className="mr-3 ml-4 text-center text-[11px] leading-[17px]">
          <div>10:23 AM</div>
          <div>15/08/2020</div>
        </div>
        <button aria-label="Show desktop" className="h-[39px] w-[14px] border border-[#44566c] bg-linear-to-br from-[#a9b6c7] to-[#66788f] shadow-[inset_0_0_0_1px_#b5c0cd]" />
      </div>
    </footer>
  );
}

export default function App() {
  return (
    <div className="flex min-h-screen flex-col font-['Noto_Sans',sans-serif]">
      <TitleBar />
      <SessionToolbar />
      <div className="flex flex-1 bg-[linear-gradient(to_bottom,#808080_80%,#606060)]">
        <div className="mr-[154px] ml-[152px] flex min-w-0 flex-1 flex-col border-l border-[#3a3a3a] bg-[linear-gradient(to_bottom,#5d83ad_0,#4c5f80_50%,#75584f_57%,#b57f4e_70%,#9b6a42_100%)] font-[Inter,sans-serif]">
          <MenuBar />
          <div className="flex flex-1 pl-[2px]">
            <div className="flex min-w-0 flex-1 flex-col overflow-hidden rounded-[5px]">
              <SafariToolbar />
              <div className="flex flex-1">
                <Sidebar />
                <ScrollTrack thumb="h-[25px]" />
                <MainPane />
                <ScrollTrack thumb="h-[133px]" />
              </div>
            </div>
            <div className="w-1 shrink-0 bg-[linear-gradient(to_bottom,#5d83ad_0,#4d6c9c_25%,#ddd_25%,#ddd_28%,#555_28%,#555_32%,#1d1b1a_32%)]" />
          </div>
          <Dock />
        </div>
      </div>
      <Taskbar />
    </div>
  );
}
